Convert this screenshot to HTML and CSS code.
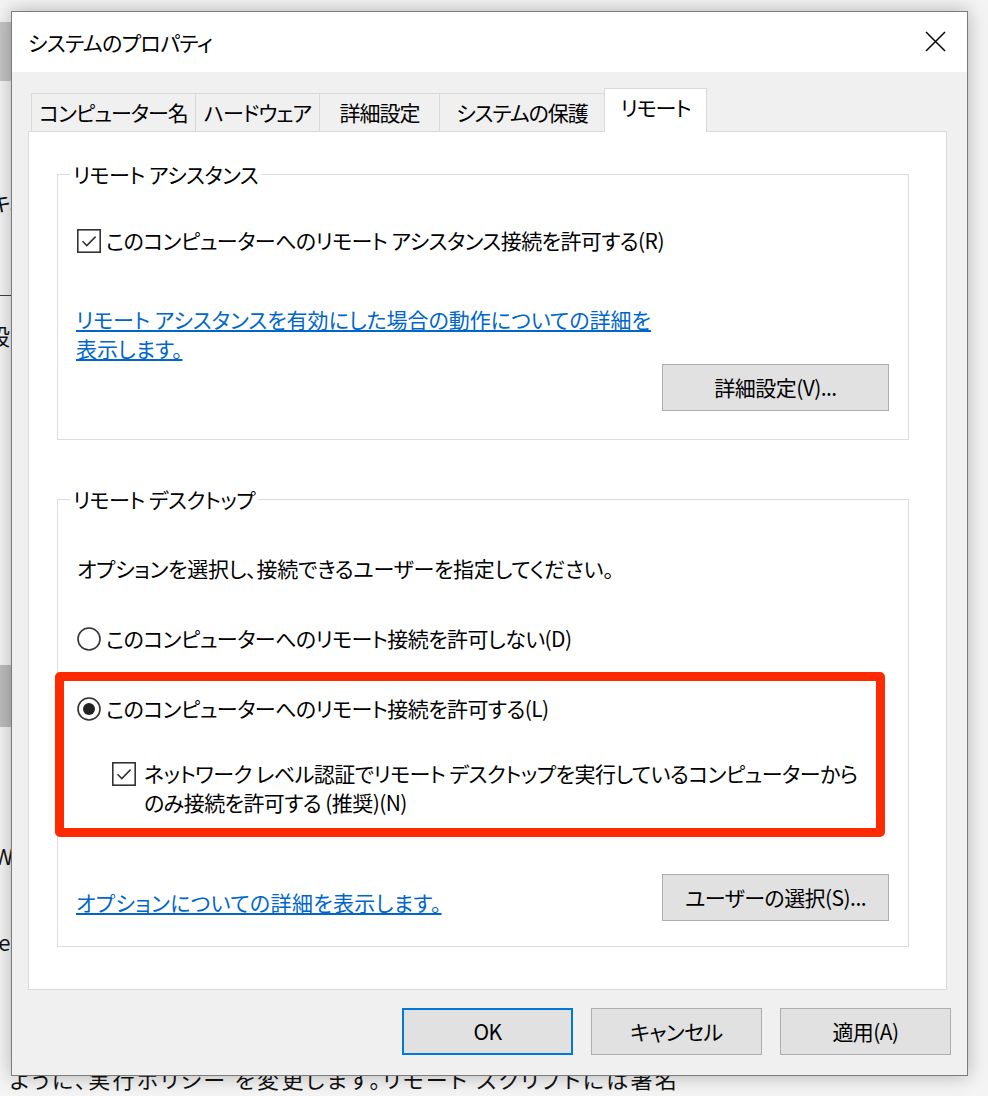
FILE: index.html
```html
<!DOCTYPE html>
<html lang="ja">
<head>
<meta charset="utf-8">
<title>システムのプロパティ</title>
<link rel="stylesheet" href="styles.css">
</head>
<body>
<div class="desktop">
  <div class="bg-block bg-block-1"></div>
  <div class="bg-line"></div>
  <div class="bg-block bg-block-2"></div>
  <span class="frag frag-1">テキ。</span>
  <span class="frag frag-2">設</span>
  <span class="frag frag-3">W</span>
  <span class="frag frag-4">ve</span>
  <div class="bg-text">ように、実行ポリシー を変更します。リモート スクリプトには署名<br>が必要です。</div>
</div>

<div class="dialog">
  <div class="titlebar">
    <span class="title">システムのプロパティ</span>
    <svg class="close" width="21" height="21" viewBox="0 0 21 21"><path d="M1 1 L20 20 M20 1 L1 20" stroke="#000" stroke-width="1.5" fill="none"/></svg>
  </div>
  <div class="body">
    <div class="tabs">
      <div class="tab t1">コンピューター名</div>
      <div class="tab t2">ハードウェア</div>
      <div class="tab t3">詳細設定</div>
      <div class="tab t4">システムの保護</div>
      <div class="tab selected">リモート</div>
    </div>
    <div class="panel">
      <fieldset class="group">
        <legend>リモート アシスタンス</legend>
        <div class="gb-body gb1">
          <div class="row">
            <svg class="box" width="24" height="24" viewBox="0 0 24 24"><rect x="0.8" y="0.8" width="22.4" height="22.4" fill="#fff" stroke="#333" stroke-width="1.6"/><path d="M5.5 12.3 L9.8 16.6 L18.6 7.6" fill="none" stroke="#333" stroke-width="1.6"/></svg>
            <span>このコンピューターへのリモート アシスタンス接続を許可する(R)</span>
          </div>
          <a class="link link1" href="#">リモート アシスタンスを有効にした場合の動作についての詳細を<br>表示します。</a>
          <div class="btn-row">
            <div class="btn">詳細設定(V)...</div>
          </div>
        </div>
      </fieldset>

      <fieldset class="group group2">
        <legend>リモート デスクトップ</legend>
        <div class="gb-body gb2">
          <div class="desc">オプションを選択し、接続できるユーザーを指定してください。</div>
          <div class="row radio1">
            <svg class="box" width="24" height="24" viewBox="0 0 24 24"><circle cx="12" cy="12" r="11" fill="#fff" stroke="#333" stroke-width="1.6"/></svg>
            <span>このコンピューターへのリモート接続を許可しない(D)</span>
          </div>
          <div class="row radio2">
            <svg class="box" width="24" height="24" viewBox="0 0 24 24"><circle cx="12" cy="12" r="11" fill="#fff" stroke="#333" stroke-width="1.6"/><circle cx="12" cy="12" r="6" fill="#222"/></svg>
            <span>このコンピューターへのリモート接続を許可する(L)</span>
          </div>
          <div class="row sub">
            <svg class="box" width="24" height="24" viewBox="0 0 24 24"><rect x="0.8" y="0.8" width="22.4" height="22.4" fill="#fff" stroke="#333" stroke-width="1.6"/><path d="M5.5 12.3 L9.8 16.6 L18.6 7.6" fill="none" stroke="#333" stroke-width="1.6"/></svg>
            <span>ネットワーク レベル認証でリモート デスクトップを実行しているコンピューターから<br>のみ接続を許可する (推奨)(N)</span>
          </div>
          <div class="bottom-row">
            <a class="link link2" href="#">オプションについての詳細を表示します。</a>
            <div class="btn">ユーザーの選択(S)...</div>
          </div>
        </div>
      </fieldset>
      <div class="highlight"></div>
    </div>
    <div class="footer">
      <div class="btn fbtn default">OK</div>
      <div class="btn fbtn">キャンセル</div>
      <div class="btn fbtn">適用(A)</div>
    </div>
  </div>
</div>
</body>
</html>
```
FILE: styles.css
```css
html, body {
  margin: 0;
  padding: 0;
}
body {
  width: 988px;
  height: 1096px;
  overflow: hidden;
  position: relative;
  background: #f4f4f4;
  font-family: "Noto Sans CJK JP", "Noto Sans", sans-serif;
  font-feature-settings: "palt";
  color: #000;
}

/* desktop behind the dialog */
.desktop {
  position: absolute;
  inset: 0;
}
.bg-block {
  position: absolute;
  left: 0;
  width: 11px;
}
.bg-block-1 { top: 22px; height: 59px; background: #c4c4c4; }
.bg-block-2 { top: 665px; height: 62px; background: #bdbdbd; }
.bg-line {
  position: absolute;
  left: 0;
  top: 295px;
  width: 11px;
  height: 1px;
  background: #444;
}
.frag {
  position: absolute;
  font-size: 22px;
  line-height: 26px;
  white-space: nowrap;
  color: #111;
}
.frag-1 { left: -30px; top: 188px; }
.frag-2 { left: -12px; top: 322px; }
.frag-3 { left: -6px; top: 842px; }
.frag-4 { left: -13px; top: 928px; }
.bg-text {
  position: absolute;
  left: 10px;
  top: 1064px;
  font-size: 22px;
  line-height: 29px;
  letter-spacing: 2.3px;
  white-space: nowrap;
  color: #111;
}

/* dialog window */
.dialog {
  position: absolute;
  left: 11px;
  top: 11px;
  width: 955px;
  height: 1063px;
  border: 1px solid #7c7c7c;
  background: #f0f0f0;
  box-shadow: 0 0 18px rgba(0, 0, 0, 0.28);
  display: flex;
  flex-direction: column;
  z-index: 1;
}
.titlebar {
  height: 60px;
  flex: none;
  background: #fff;
  display: flex;
  align-items: center;
  justify-content: space-between;
  padding: 0 21px 0 16px;
  font-size: 21px;
  letter-spacing: -0.6px;
}
.title {
  line-height: 29px;
  margin-top: 1px;
}
.close {
  display: block;
  margin-top: -2px;
}

.body {
  flex: 1;
  padding: 16px 20px 0 16px;
  display: flex;
  flex-direction: column;
  font-size: 21px;
  line-height: 29px;
  letter-spacing: -0.55px;
}

/* tabs */
.tabs {
  display: flex;
  align-items: flex-end;
  height: 43px;
  padding-left: 3px;
}
.tab {
  height: 38px;
  box-sizing: border-box;
  border: 1px solid #d9d9d9;
  border-bottom: none;
  margin-right: -1px;
  padding: 0;
  display: flex;
  align-items: center;
  justify-content: center;
  background: #f0f0f0;
  white-space: nowrap;
  letter-spacing: -1px;
}
.t1 { width: 165px; }
.t2 { width: 125px; }
.t3 { width: 121px; }
.t4 { width: 166px; }
.tab.selected {
  width: 103px;
  height: 44px;
  margin-bottom: -1px;
  padding-bottom: 6px;
  background: #fff;
  position: relative;
  z-index: 2;
}

/* panel */
.panel {
  position: relative;
  background: #fff;
  border: 1px solid #d9d9d9;
  padding: 30px 37px 42px 28px;
}
.group {
  margin: 0;
  padding: 0;
  border: 1px solid #dcdcdc;
  min-width: 0;
}
.group legend {
  margin-left: 12px;
  padding: 0 3px;
  font-size: 21px;
  line-height: 24px;
  white-space: nowrap;
}
.group2 {
  margin-top: 47px;
}
.gb-body {
  padding: 0 19px 0 19px;
}
.gb1 {
  padding-top: 40px;
  padding-bottom: 28px;
}
.gb2 {
  padding-top: 43px;
  padding-bottom: 25px;
}

.row {
  display: flex;
  align-items: center;
  gap: 5px;
  white-space: nowrap;
}
.row .box {
  flex: none;
  display: block;
}
.link {
  display: block;
  color: #0066cc;
  text-decoration: underline;
  text-underline-offset: 2px;
  white-space: nowrap;
  margin-left: -1px;
  letter-spacing: 0;
}
.link1 {
  margin-top: 50px;
}
.btn-row {
  display: flex;
  justify-content: flex-end;
  margin-top: 1px;
}
.btn {
  width: 227px;
  height: 47px;
  box-sizing: border-box;
  background: #e1e1e1;
  border: 1px solid #adadad;
  display: flex;
  align-items: center;
  justify-content: center;
  white-space: nowrap;
}

.desc {
  white-space: nowrap;
  letter-spacing: -0.25px;
}
.radio1, .radio2 {
  margin-top: 41px;
}
.sub {
  margin-top: 36px;
  margin-left: 35px;
  align-items: flex-start;
  gap: 8px;
}
.sub .box {
  margin-top: 3px;
}
.bottom-row {
  margin-top: 57px;
  display: flex;
  justify-content: space-between;
  align-items: flex-end;
}
.link2 {
  margin-bottom: 4px;
  letter-spacing: 0.35px;
}

/* red annotation box */
.highlight {
  position: absolute;
  left: 26px;
  top: 540px;
  width: 830px;
  height: 165px;
  box-sizing: border-box;
  border: 9px solid #ff2a00;
  border-radius: 5px;
  pointer-events: none;
}

/* footer buttons */
.footer {
  display: flex;
  justify-content: flex-end;
  gap: 18px;
  margin-top: 18px;
  margin-right: -4px;
}
.fbtn {
  width: 171px;
}
.fbtn.default {
  border: 2px solid #0078d7;
}
```
